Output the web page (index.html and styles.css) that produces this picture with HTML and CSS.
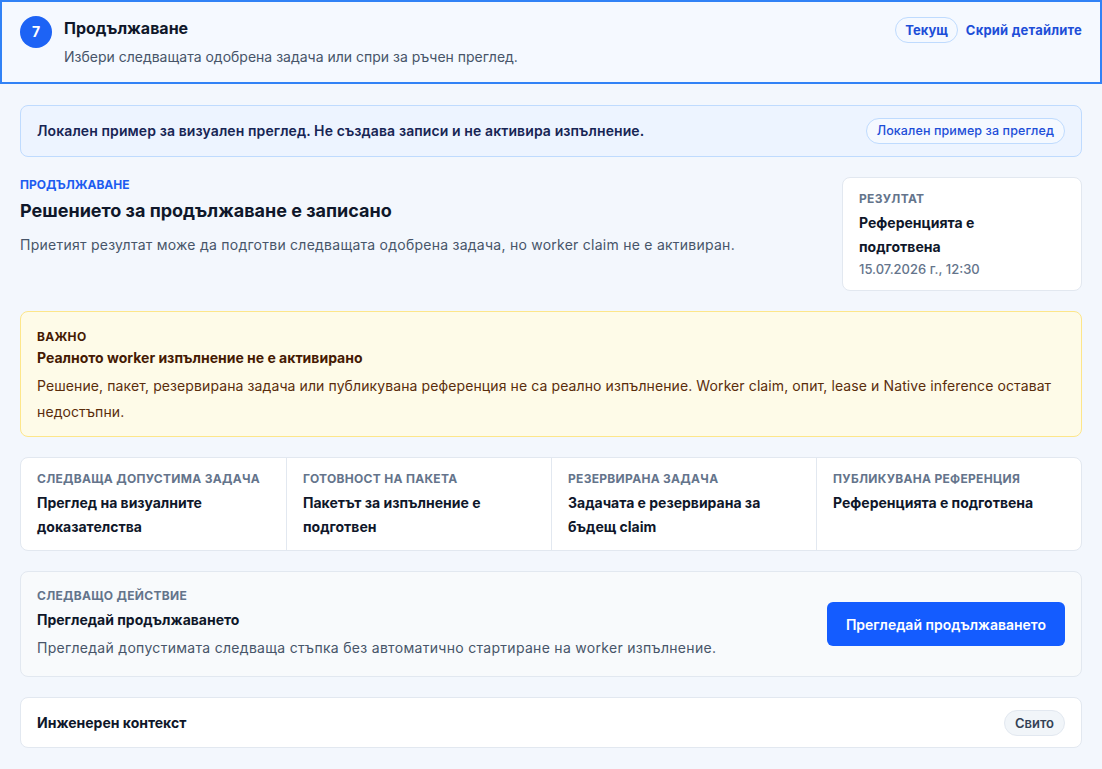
FILE: index.html
```html
<!DOCTYPE html>
<html lang="bg">
<head>
  <meta charset="UTF-8">
  <meta name="viewport" content="width=device-width, initial-scale=1">
  <title>Продължаване</title>
  <link rel="stylesheet" href="styles.css">
</head>
<body>

  <header class="step">
    <div class="step-num">7</div>
    <div class="step-text">
      <h1>Продължаване</h1>
      <p>Избери следващата одобрена задача или спри за ръчен преглед.</p>
    </div>
    <div class="step-actions">
      <span class="pill pill-blue">Текущ</span>
      <a class="link" href="#">Скрий детайлите</a>
    </div>
  </header>

  <main class="content">
    <div class="banner">
      <span>Локален пример за визуален преглед. Не създава записи и не активира изпълнение.</span>
      <span class="pill pill-blue pill-light">Локален пример за преглед</span>
    </div>

    <section class="summary">
      <div class="summary-main">
        <div class="eyebrow">Продължаване</div>
        <h2>Решението за продължаване е записано</h2>
        <p>Приетият резултат може да подготви следващата одобрена задача, но worker claim не е активиран.</p>
      </div>
      <div class="card result">
        <div class="label">Резултат</div>
        <div class="value">Референцията е подготвена</div>
        <div class="date">15.07.2026 г., 12:30</div>
      </div>
    </section>

    <div class="warning">
      <div class="label">Важно</div>
      <div class="value">Реалното worker изпълнение не е активирано</div>
      <p>Решение, пакет, резервирана задача или публикувана референция не са реално изпълнение. Worker claim, опит, lease и Native inference остават недостъпни.</p>
    </div>

    <div class="card stats">
      <div class="stat">
        <div class="label">Следваща допустима задача</div>
        <div class="value">Преглед на визуалните доказателства</div>
      </div>
      <div class="stat">
        <div class="label">Готовност на пакета</div>
        <div class="value">Пакетът за изпълнение е подготвен</div>
      </div>
      <div class="stat">
        <div class="label">Резервирана задача</div>
        <div class="value">Задачата е резервирана за бъдещ claim</div>
      </div>
      <div class="stat">
        <div class="label">Публикувана референция</div>
        <div class="value">Референцията е подготвена</div>
      </div>
    </div>

    <div class="card next">
      <div>
        <div class="label">Следващо действие</div>
        <div class="value">Прегледай продължаването</div>
        <p>Прегледай допустимата следваща стъпка без автоматично стартиране на worker изпълнение.</p>
      </div>
      <button class="btn">Прегледай продължаването</button>
    </div>

    <div class="card context">
      <span class="value">Инженерен контекст</span>
      <span class="pill pill-gray">Свито</span>
    </div>
  </main>

</body>
</html>
```

FILE: styles.css
```css
:root {
  --bg: #f3f7fd;
  --text: #0f172a;
  --muted: #475569;
  --label: #64748b;
  --blue: #1d4ed8;
  --border: #e2e8f0;
  --radius: 8px;
}

* {
  box-sizing: border-box;
}

body {
  margin: 0;
  font-family: Inter, "Noto Sans", sans-serif;
  background: var(--bg);
  color: var(--text);
  font-size: 14px;
  line-height: 20px;
}

h1, h2, p {
  margin: 0;
}

/* Заглавна стъпка */
.step {
  display: flex;
  align-items: flex-start;
  gap: 12px;
  padding: 14px 18px 15px 18px;
  background: #f5f9ff;
  border: 2px solid #3182f6;
}

.step-num {
  width: 32px;
  height: 32px;
  flex: none;
  border-radius: 50%;
  background: #1d63f5;
  color: white;
  font-weight: 700;
  font-size: 14px;
  display: flex;
  align-items: center;
  justify-content: center;
}

.step-text {
  flex: 1;
}

.step h1 {
  font-size: 16px;
  line-height: 24px;
  font-weight: 700;
}

.step p {
  margin-top: 7px;
  color: var(--muted);
}

.step-actions {
  display: flex;
  align-items: center;
  gap: 8px;
  padding-top: 1px;
}

.link {
  color: var(--blue);
  font-weight: 700;
  font-size: 13px;
  letter-spacing: 0.2px;
  text-decoration: none;
}

.pill {
  display: inline-flex;
  align-items: center;
  height: 26px;
  padding: 0 10px;
  border-radius: 999px;
  font-size: 12px;
  font-weight: 600;
  white-space: nowrap;
}

.pill-blue {
  color: var(--blue);
  border: 1px solid #bfdbfe;
  background: #f5f9ff;
  font-size: 13px;
  font-weight: 700;
  padding: 0 9px;
}

.pill-light {
  background: #f5f9ff;
  font-weight: 500;
  font-size: 12.5px;
  padding: 0 10px;
}

.pill-gray {
  color: #334155;
  background: #f1f5f9;
  border: 1px solid var(--border);
  font-size: 13px;
}

/* Съдържание */
.content {
  padding: 21px 20px 20px;
  display: flex;
  flex-direction: column;
  gap: 20px;
}

.banner {
  display: flex;
  align-items: center;
  justify-content: space-between;
  padding: 0 16px;
  height: 52px;
  background: #edf4ff;
  border: 1px solid #bfdbfe;
  border-radius: var(--radius);
  color: #172554;
  font-weight: 600;
  letter-spacing: 0.1px;
}

.card {
  background: white;
  border: 1px solid var(--border);
  border-radius: var(--radius);
}

.label {
  font-size: 12px;
  line-height: 16px;
  font-weight: 700;
  text-transform: uppercase;
  letter-spacing: 0.3px;
  color: var(--label);
}

.value {
  font-weight: 700;
  line-height: 24px;
}

.summary {
  display: flex;
  justify-content: space-between;
  align-items: flex-start;
  gap: 24px;
}

.eyebrow {
  font-size: 12px;
  line-height: 16px;
  font-weight: 700;
  text-transform: uppercase;
  color: #1d5cf0;
}

.summary h2 {
  margin-top: 5px;
  font-size: 18px;
  line-height: 26px;
  font-weight: 700;
}

.summary p {
  margin-top: 11px;
  color: var(--muted);
  letter-spacing: 0.25px;
}

.result {
  width: 240px;
  padding: 13px 32px 11px 16px;
}

.result .value {
  margin-top: 4px;
}

.date {
  font-size: 13px;
  color: var(--label);
  font-weight: 500;
}

.warning {
  padding: 17px 16px 11px;
  background: #fefbe8;
  border: 1px solid #fde68a;
  border-radius: var(--radius);
  color: #451a03;
}

.warning .label {
  color: #451a03;
}

.warning .value {
  margin-top: 1px;
}

.warning p {
  margin-top: 3px;
  line-height: 26px;
  color: #5a2d0c;
  letter-spacing: 0.1px;
}

.stats {
  display: grid;
  grid-template-columns: repeat(4, 1fr);
}

.stat {
  padding: 13px 16px 11px;
  min-height: 90px;
}

.stat + .stat {
  border-left: 1px solid var(--border);
}

.stat .value {
  margin-top: 4px;
}

.next {
  display: flex;
  align-items: center;
  justify-content: space-between;
  padding: 16px 16px 16px;
  background: #f8fafc;
}

.next .value {
  margin-top: 4px;
}

.next p {
  margin-top: 4px;
  line-height: 24px;
  color: var(--muted);
  letter-spacing: 0.3px;
}

.btn {
  height: 44px;
  padding: 0 19px;
  border: none;
  border-radius: 6px;
  background: #145cff;
  color: white;
  font-family: inherit;
  font-size: 14px;
  font-weight: 600;
  cursor: pointer;
}

.context {
  display: flex;
  align-items: center;
  justify-content: space-between;
  height: 51px;
  padding: 0 16px;
}
```
